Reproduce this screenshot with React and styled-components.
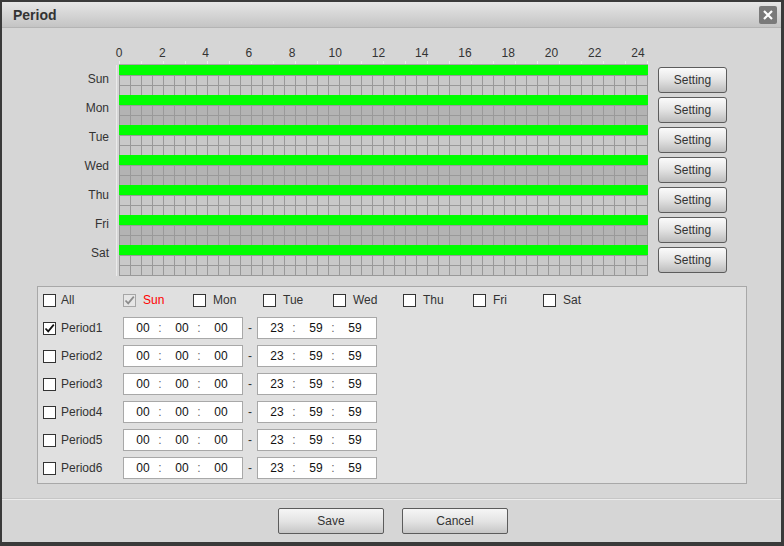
import styled, { createGlobalStyle } from "styled-components";

const GlobalStyle = createGlobalStyle`
  html, body {
    margin: 0;
    padding: 0;
    background: #d4d4d4;
  }
  body {
    font-family: "Liberation Sans", Arial, sans-serif;
    font-size: 12px;
    color: #333;
  }
`;

const days = ["Sun", "Mon", "Tue", "Wed", "Thu", "Fri", "Sat"];
const hours = [0, 2, 4, 6, 8, 10, 12, 14, 16, 18, 20, 22, 24];
const periods = [1, 2, 3, 4, 5, 6];

function Check({ checked, disabled }) {
  return (
    <Box $disabled={disabled}>
      {checked && (
        <svg width="11" height="11" viewBox="0 0 11 11">
          <path
            d="M1.5 5.5 L4.2 8.4 L9.8 1.6"
            fill="none"
            stroke={disabled ? "#8c8c8c" : "#111"}
            strokeWidth="1.7"
          />
        </svg>
      )}
    </Box>
  );
}

function TimeBox({ h, m, s }) {
  return (
    <Time>
      <Seg>{h}</Seg>
      <Colon>:</Colon>
      <Seg>{m}</Seg>
      <Colon>:</Colon>
      <Seg>{s}</Seg>
    </Time>
  );
}

export default function App() {
  return (
    <>
      <GlobalStyle />
      <Window>
        <TitleBar>
          <Title>Period</Title>
          <Close>
            <svg width="12" height="12" viewBox="0 0 12 12">
              <path d="M2 2 L10 10 M10 2 L2 10" stroke="#fff" strokeWidth="2.2" />
            </svg>
          </Close>
        </TitleBar>
        <Main>
          <Schedule>
            <Spacer />
            <Hours>
              {hours.map((h) => (
                <Hour key={h}>{h}</Hour>
              ))}
            </Hours>
            <Spacer $end />
            <Spacer />
            <Ruler />
            <Spacer $end />
            <DayLabels>
              {days.map((d) => (
                <DayLabel key={d}>{d}</DayLabel>
              ))}
            </DayLabels>
            <Axis />
            <Tracks>
              {days.map((d, i) => (
                <Track key={d}>
                  <Green />
                  <Cells $dark={i % 2 === 1} $last={i === days.length - 1} />
                </Track>
              ))}
            </Tracks>
            <span />
            <Buttons>
              {days.map((d) => (
                <SetButton key={d}>Setting</SetButton>
              ))}
            </Buttons>
          </Schedule>
          <Panel>
            <HeadRow>
              <Item $w={80} $gap={5}>
                <Check />
                All
              </Item>
              {days.map((d, i) => (
                <Item key={d} $w={70} $gap={7} $red={i === 0}>
                  <Check checked={i === 0} disabled={i === 0} />
                  {d}
                </Item>
              ))}
            </HeadRow>
            {periods.map((p) => (
              <PeriodRow key={p}>
                <Item $w={80} $gap={5}>
                  <Check checked={p === 1} />
                  Period{p}
                </Item>
                <TimeBox h="00" m="00" s="00" />
                <Dash>-</Dash>
                <TimeBox h="23" m="59" s="59" />
              </PeriodRow>
            ))}
          </Panel>
        </Main>
        <Footer>
          <Button>Save</Button>
          <Button>Cancel</Button>
        </Footer>
      </Window>
    </>
  );
}

const Window = styled.div`
  width: 784px;
  height: 546px;
  box-sizing: border-box;
  border-style: solid;
  border-color: #3a3a3a;
  border-width: 2px 3px 4px 2px;
  background: #d6d6d6;
  display: flex;
  flex-direction: column;
`;

const TitleBar = styled.div`
  height: 26px;
  box-sizing: border-box;
  border-bottom: 1px solid #b4b4b4;
  background: linear-gradient(to bottom, #e6e6e6, #c4c4c4);
  display: flex;
  align-items: center;
  justify-content: space-between;
  padding: 0 4px 0 11px;
`;

const Title = styled.div`
  font-weight: bold;
  font-size: 14px;
  color: #333;
`;

const Close = styled.div`
  width: 18px;
  height: 18px;
  margin-top: 1px;
  border-radius: 2px;
  background: #7a7a7a;
  display: flex;
  align-items: center;
  justify-content: center;
`;

const Main = styled.div`
  flex: 1;
  display: flex;
  flex-direction: column;
`;

const Schedule = styled.div`
  display: grid;
  grid-template-columns: 107px 10px 529px 10px 69px;
  padding-top: 18px;
`;

const Spacer = styled.div`
  grid-column: ${(p) => (p.$end ? "4 / 6" : "1 / 3")};
`;

const Hours = styled.div`
  display: flex;
  height: 14px;
  margin-left: -21.6px;
`;

const Hour = styled.div`
  flex: 0 0 43.25px;
  text-align: center;
  line-height: 14px;
  color: #333;
`;

const Ruler = styled.div`
  height: 5px;
  box-sizing: border-box;
  border-bottom: 1px solid #a9a9a9;
  background-image: linear-gradient(to right, #eeeeee 1px, transparent 1px);
  background-size: 22px 3px;
  background-repeat: repeat-x;
  background-position: 0 1px;
`;

const DayLabels = styled.div`
  display: flex;
  flex-direction: column;
  padding-top: 1px;
`;

const DayLabel = styled.div`
  text-align: right;
  height: 29px;
  line-height: 27px;
  color: #333;
`;

const Axis = styled.div`
  background: linear-gradient(
    to right,
    transparent 7px,
    #ebebeb 7px,
    #ebebeb 8px,
    transparent 8px
  );
`;

const Tracks = styled.div`
  display: flex;
  flex-direction: column;
`;

const Track = styled.div`
  display: flex;
  flex-direction: column;
`;

const Green = styled.div`
  height: 10px;
  background: #00ff00;
`;

const Cells = styled.div`
  height: ${(p) => (p.$last ? "21px" : "20px")};
  box-sizing: border-box;
  border-right: 1px solid #999;
  border-bottom: ${(p) => (p.$last ? "1px solid #999" : "none")};
  background-color: ${(p) => (p.$dark ? "#b3b3b3" : "#c9c9c9")};
  background-image: linear-gradient(to right, #999 1px, transparent 1px),
    linear-gradient(to bottom, #999 1px, transparent 1px);
  background-size: 11px 10px;
`;

const Buttons = styled.div`
  display: flex;
  flex-direction: column;
  gap: 4px;
  padding-top: 2px;
`;

const SetButton = styled.button`
  height: 26px;
  width: 69px;
  padding: 0;
  border: 1px solid #5c5c5c;
  border-radius: 3px;
  background: linear-gradient(to bottom, #fbfbfb, #e6e6e6 45%, #bdbdbd);
  font-family: "Liberation Sans", Arial, sans-serif;
  font-size: 12px;
  color: #333;
`;

const Panel = styled.div`
  margin: 10px 0 0 35px;
  width: 710px;
  box-sizing: border-box;
  border: 1px solid #a8a8a8;
  background: #e0e0e0;
  padding: 1px 5px 1px;
`;

const HeadRow = styled.div`
  display: flex;
  align-items: center;
  height: 24px;
  margin-bottom: 2px;
`;

const PeriodRow = styled.div`
  display: flex;
  align-items: center;
  height: 28px;
`;

const Item = styled.label`
  flex: 0 0 ${(p) => p.$w}px;
  display: flex;
  align-items: center;
  gap: ${(p) => p.$gap}px;
  color: ${(p) => (p.$red ? "#ff0000" : "#333")};
`;

const Box = styled.span`
  width: 13px;
  height: 13px;
  box-sizing: border-box;
  border: 1px solid ${(p) => (p.$disabled ? "#a6a6a6" : "#333")};
  background: ${(p) => (p.$disabled ? "#e6e6e6" : "#fff")};
  display: inline-flex;
  align-items: center;
  justify-content: center;
`;

const Time = styled.div`
  width: 120px;
  height: 22px;
  box-sizing: border-box;
  border: 1px solid #a8a8a8;
  background: #fff;
  display: flex;
  align-items: center;
  padding-left: 7px;
`;

const Seg = styled.span`
  width: 24px;
  text-align: center;
  color: #111;
`;

const Colon = styled.span`
  width: 10px;
  margin-right: 5px;
  text-align: center;
  color: #666;
`;

const Dash = styled.span`
  width: 14px;
  text-align: center;
  color: #333;
`;

const Footer = styled.div`
  height: 43px;
  box-sizing: border-box;
  border-top: 1px solid #ececec;
  box-shadow: 0 -1px 0 #c6c6c6;
  display: flex;
  justify-content: center;
  gap: 18px;
  padding: 8px 0 0 3px;
`;

const Button = styled.button`
  width: 106px;
  height: 26px;
  padding: 0;
  border: 1px solid #5c5c5c;
  border-radius: 2px;
  background: linear-gradient(to bottom, #f6f6f6, #e4e4e4 50%, #c6c6c6);
  font-family: "Liberation Sans", Arial, sans-serif;
  font-size: 12px;
  color: #333;
`;
